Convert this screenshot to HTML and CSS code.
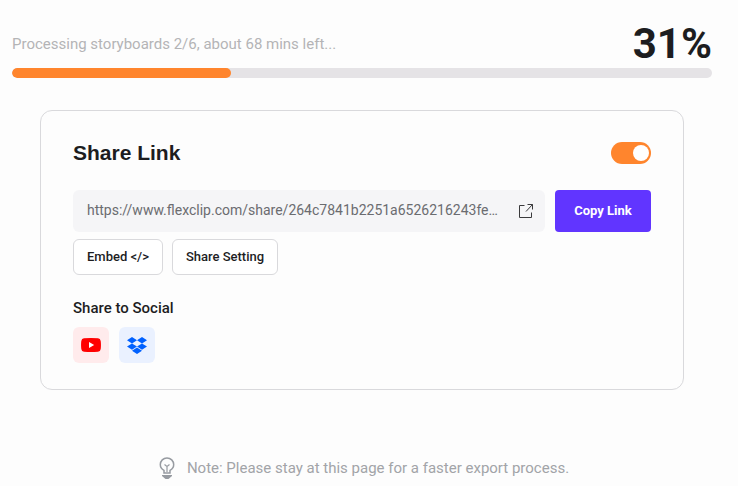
FILE: index.html
```
<!DOCTYPE html>
<html lang="en">
<head>
  <meta charset="UTF-8" />
  <meta name="viewport" content="width=device-width, initial-scale=1.0"/>
  <title>Export Video</title>
  <link rel="stylesheet" href="styles.css">
</head>
<body>
  <div class="progress-info">
    <p class="status">Processing storyboards 2/6, about 68 mins left...</p>
    <strong class="percent">31%</strong>
  </div>
  <div class="progress" role="progressbar" aria-label="Export progress" aria-valuenow="31" aria-valuemin="0" aria-valuemax="100">
    <div class="progress-bar" style="width: 31.3%"></div>
  </div>

  <main class="share-card">
    <div class="card-header">
      <h2><label for="share-toggle">Share Link</label></h2>
      <input type="checkbox" id="share-toggle" class="toggle" checked />
    </div>

    <div class="link-row">
      <div class="link-box">
        <input type="text" class="link-input" aria-label="Share URL" value="https://www.flexclip.com/share/264c7841b2251a6526216243fe8d90b7c1.html" readonly />
        <a href="#" class="open-link" aria-label="Open link">
          <svg width="16" height="16" viewBox="0 0 16 16" fill="none" stroke="#3a3a3c" stroke-width="1">
            <path d="M6.500 2.500h-5v12h12v-5M9.500 1.500h5v5M14.500 1.500L8 8.500"/>
          </svg>
        </a>
      </div>
      <button class="copy-btn">Copy Link</button>
    </div>

    <div class="actions">
      <button class="outline-btn">Embed &lt;/&gt;</button>
      <button class="outline-btn">Share Setting</button>
    </div>

    <h3>Share to Social</h3>
    <div class="socials">
      <button class="social youtube" aria-label="YouTube">
        <svg width="20" height="14" viewBox="0 0 20 14">
          <path fill="#f00" d="M3 .3Q10-.3 17 .3 19.4.5 19.7 3 20.2 7 19.7 11 19.4 13.5 17 13.7 10 14.3 3 13.7.6 13.5.3 11-.2 7 .3 3 .6.5 3 .3z"/>
          <path fill="#fff" d="M8 4l5.200 3L8 10z"/>
        </svg>
      </button>
      <button class="social dropbox" aria-label="Dropbox">
        <svg width="20" height="17" viewBox="0 0 20 17" fill="#0061ff">
          <path d="M5 0l5 3.2-5 3.2-5-3.2zM15 0l5 3.2-5 3.2-5-3.2zM5 6.4l5 3.2-5 3.2-5-3.2zM15 6.4l5 3.2-5 3.2-5-3.2zM10 10.6l5 3.2-5 3.2-5-3.2z"/>
        </svg>
      </button>
    </div>
  </main>

  <footer class="note">
    <svg width="16" height="22" viewBox="0 0 16 22" fill="none" stroke="#979ba1" stroke-width="1.5">
      <path d="M5 16v-2.600C2.600 12.200 1.300 10 1.300 7.600a6.700 6.700 0 0 1 13.400 0c0 2.400-1.300 4.600-3.700 5.800V16z"/>
      <path stroke-width="1.200" d="M5.500 7.500L8 9.500l2.500-2M8 9.500V15"/>
      <path fill="#979ba1" stroke="none" d="M3 18h10v1l-3.500 3h-3L3 19z"/>
    </svg>
    <p>Note: Please stay at this page for a faster export process.</p>
  </footer>
</body>
</html>
```
FILE: styles.css
```
:root {
  --page-bg: #fdfdfd;
  --text: #1d1d1f;
  --border: #d9d9dc;
  --orange: #ff852d;
  --purple: #6135ff;
}

* {
  margin: 0;
  padding: 0;
  box-sizing: border-box;
  font-family: Roboto, sans-serif;
}

body {
  background: var(--page-bg);
  color: var(--text);
  padding: 20px 26px 0 12px;
}

.progress-info {
  display: flex;
  align-items: center;
  justify-content: space-between;
  height: 48px;
}

.status {
  font-size: 15px;
  color: #b4b4b6;
}

.percent {
  font-size: 42px;
  font-weight: 700;
  line-height: 48px;
}

.progress {
  height: 10px;
  border-radius: 5px;
  background: #e5e3e6;
  overflow: hidden;
}

.progress-bar {
  height: 100%;
  border-radius: 5px;
  background: var(--orange);
}

.share-card {
  margin: 32px 28px 0;
  padding: 30px 32px 26px;
  border: 1px solid var(--border);
  border-radius: 12px;
}

.card-header {
  display: flex;
  align-items: center;
  justify-content: space-between;
}

h2 label {
  display: block;
  font-family: "Liberation Sans", Arial, sans-serif;
  font-size: 21px;
  font-weight: 700;
  line-height: 24px;
}

.toggle {
  appearance: none;
  display: flex;
  align-items: center;
  justify-content: flex-end;
  width: 40px;
  height: 22px;
  padding: 2px;
  border-radius: 11px;
  background: #c8c8cc;
  cursor: pointer;
}

.toggle:checked {
  background: var(--orange);
}

.toggle::before {
  content: "";
  width: 16px;
  height: 16px;
  border-radius: 50%;
  background: #fff;
}

.link-row {
  display: flex;
  gap: 10px;
  margin-top: 25px;
}

.link-box {
  flex: 1;
  display: flex;
  align-items: center;
  gap: 20px;
  height: 42px;
  padding: 0 11px 0 14px;
  border-radius: 6px;
  background: #f5f5f7;
}

.link-input {
  flex: 1;
  min-width: 0;
  padding-bottom: 2px;
  border: none;
  outline: none;
  background: transparent;
  font-size: 14px;
  color: #6b6c70;
  text-overflow: ellipsis;
}

.open-link {
  display: flex;
}

.copy-btn {
  width: 96px;
  padding-bottom: 2px;
  border: none;
  border-radius: 4px;
  font-size: 13px;
  font-weight: 700;
  color: #fff;
  background: var(--purple);
  cursor: pointer;
}

.actions {
  display: flex;
  gap: 9px;
  margin-top: 7px;
}

.outline-btn {
  height: 36px;
  padding: 0 13px 2px;
  border: 1px solid var(--border);
  border-radius: 6px;
  font-size: 13px;
  font-weight: 500;
  color: var(--text);
  background: #fff;
  cursor: pointer;
}

h3 {
  margin-top: 23px;
  font-size: 15px;
  font-weight: 500;
  line-height: 20px;
}

.socials {
  display: flex;
  gap: 10px;
  margin-top: 9px;
}

.social {
  display: flex;
  align-items: center;
  justify-content: center;
  width: 36px;
  height: 36px;
  border: none;
  border-radius: 6px;
  cursor: pointer;
}

.youtube {
  background: #ffebec;
}

.dropbox {
  background: #eaf1ff;
}

.note {
  display: flex;
  align-items: center;
  justify-content: center;
  gap: 12px;
  margin-top: 67px;
  padding-left: 4px;
  font-size: 15px;
  color: #a2a4a8;
}
```
